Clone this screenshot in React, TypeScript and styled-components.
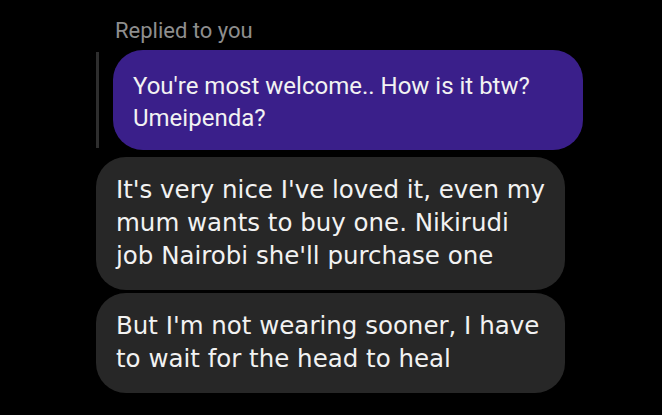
import styled, { createGlobalStyle } from 'styled-components'

const GlobalStyle = createGlobalStyle`
  html, body {
    margin: 0;
    padding: 0;
    background: #000;
  }
  body {
    width: 662px;
    height: 415px;
    overflow: hidden;
  }
`

const Thread = styled.main`
  display: flex;
  flex-direction: column;
  padding: 17px 0 0 96px;
  width: 662px;
  height: 415px;
  box-sizing: border-box;
  background: #000;
`

const ReplyLabel = styled.div`
  margin-left: 19px;
  font-family: Roboto, 'Liberation Sans', sans-serif;
  font-size: 22px;
  line-height: 28px;
  color: #8e8e8e;
`

const QuoteRow = styled.div`
  display: flex;
  align-items: stretch;
  margin-top: 5px;
`

const QuoteBar = styled.div`
  width: 3px;
  margin: 2px 0 2px 0;
  background: #2e2e2e;
`

const Bubble = styled.div<{ $sent?: boolean; $width: number }>`
  box-sizing: border-box;
  width: ${(p) => p.$width}px;
  margin-left: ${(p) => (p.$sent ? 14 : 0)}px;
  padding: ${(p) => (p.$sent ? '20px 16px 16px 20px' : '16px 12px 18px 20px')};
  border-radius: 30px;
  background: ${(p) => (p.$sent ? '#3a1f8a' : '#272727')};
  color: #f2f2f2;
  white-space: nowrap;
  font-family: ${(p) =>
    p.$sent ? "Roboto, 'Liberation Sans', sans-serif" : "'DejaVu Sans', 'Open Sans', sans-serif"};
  font-size: ${(p) => (p.$sent ? 24 : 24.5)}px;
  line-height: ${(p) => (p.$sent ? 32 : 33)}px;
`

const Received = styled.div`
  display: flex;
  flex-direction: column;
  gap: 3px;
  margin-top: 7px;
`

export default function App() {
  return (
    <>
      <GlobalStyle />
      <Thread>
        <ReplyLabel>Replied to you</ReplyLabel>
        <QuoteRow>
          <QuoteBar />
          <Bubble $sent $width={470}>
            You're most welcome.. How is it btw?
            <br />
            Umeipenda?
          </Bubble>
        </QuoteRow>
        <Received>
          <Bubble $width={469}>
            It's very nice I've loved it, even my
            <br />
            mum wants to buy one. Nikirudi
            <br />
            job Nairobi she'll purchase one
          </Bubble>
          <Bubble $width={469}>
            But I'm not wearing sooner, I have
            <br />
            to wait for the head to heal
          </Bubble>
        </Received>
      </Thread>
    </>
  )
}
